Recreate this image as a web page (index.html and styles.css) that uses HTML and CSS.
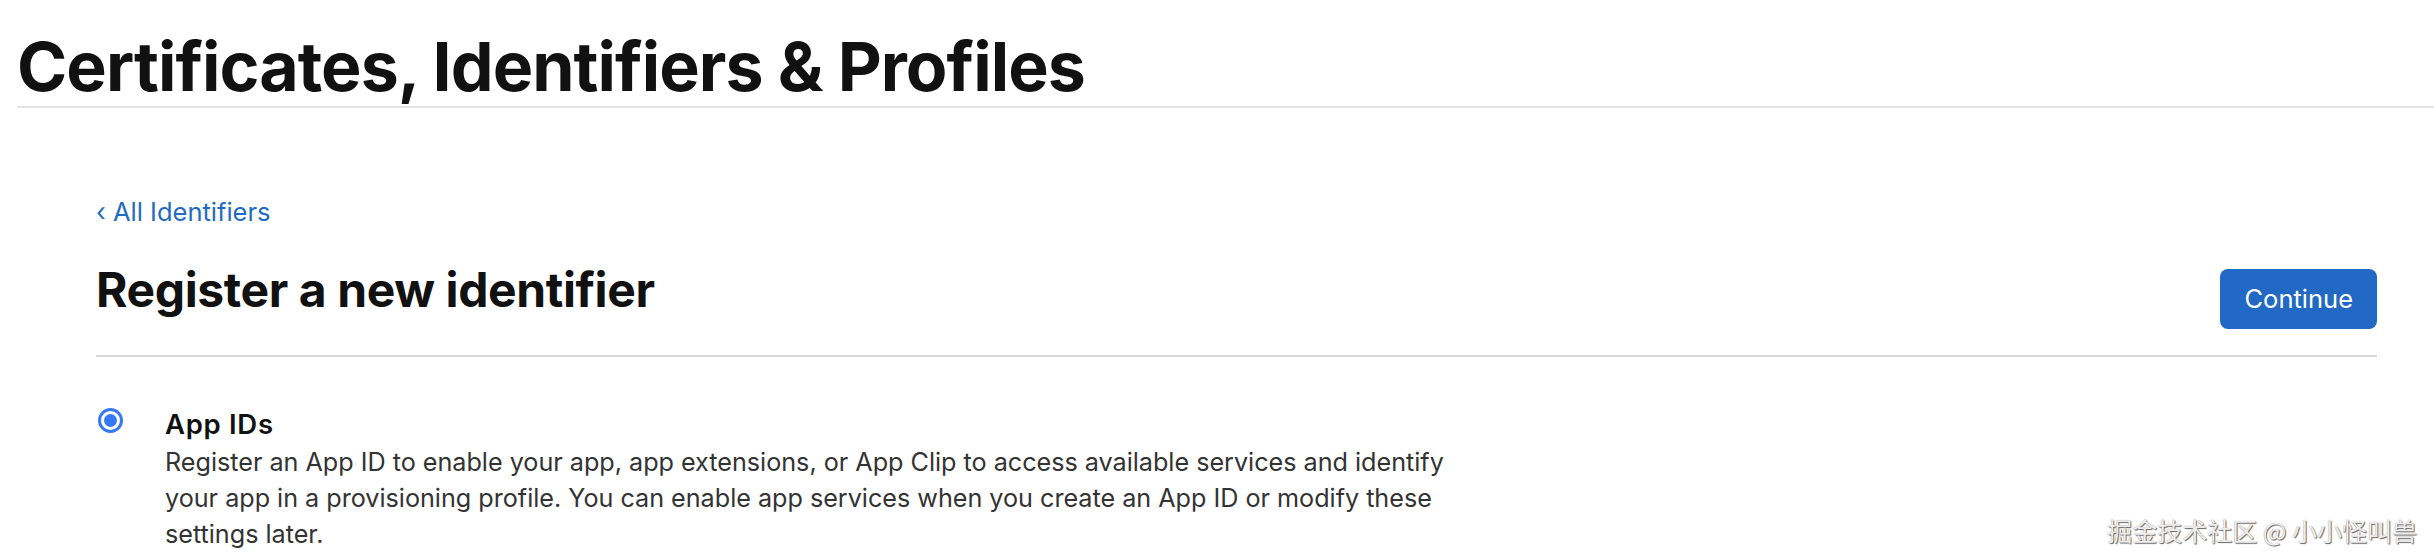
FILE: index.html
```html
<!DOCTYPE html>
<html lang="en">
<head>
<meta charset="utf-8">
<title>Certificates, Identifiers &amp; Profiles</title>
<link rel="stylesheet" href="styles.css">
</head>
<body>
<header class="page-header">
  <h1 class="page-title">Certificates, Identifiers &amp; Profiles</h1>
</header>
<main class="content">
  <a class="back-link" href="#">‹ All Identifiers</a>
  <div class="title-row">
    <h2 class="section-title">Register a new identifier</h2>
    <button class="btn-primary" type="button">Continue</button>
  </div>
  <ul class="options">
    <li class="option">
      <span class="radio checked"><span class="radio-dot"></span></span>
      <div class="option-body">
        <div class="option-title">App IDs</div>
        <p class="option-desc">Register an App ID to enable your app, app extensions, or App Clip to access available services and identify your app in a provisioning profile. You can enable app services when you create an App ID or modify these settings later.</p>
      </div>
    </li>
  </ul>
</main>
<div class="watermark">掘金技术社区 @ 小小怪叫兽</div>
</body>
</html>
```
FILE: styles.css
```css
html, body {
  margin: 0;
  padding: 0;
  background: #ffffff;
}
body {
  font-family: Inter, "Liberation Sans", sans-serif;
  color: #1d1d1f;
  position: relative;
  min-height: 560px;
  overflow: hidden;
}
.page-header {
  margin-left: 17px;
  padding-top: 32px;
  padding-bottom: 6px;
  border-bottom: 2px solid #e3e3e5;
}
.page-title {
  margin: 0;
  font-size: 68px;
  line-height: 68px;
  font-weight: 700;
  letter-spacing: -0.95px;
  color: #111111;
}
.content {
  padding: 86px 57px 0 96px;
}
.back-link {
  display: inline-block;
  font-size: 25.5px;
  line-height: 36px;
  color: #1f6bc4;
  text-decoration: none;
}
.title-row {
  display: flex;
  justify-content: space-between;
  align-items: flex-start;
  margin-top: 32px;
  padding-bottom: 26px;
  border-bottom: 2px solid #d9d9dc;
}
.section-title {
  margin: 0;
  font-size: 48px;
  line-height: 56px;
  font-weight: 700;
  letter-spacing: -0.4px;
  color: #111111;
}
.btn-primary {
  margin-top: 6.5px;
  height: 60px;
  padding: 0 24px;
  border: 0;
  border-radius: 8px;
  background: #2169c4;
  color: #ffffff;
  font-family: inherit;
  font-size: 25.5px;
}
.options {
  list-style: none;
  margin: 0;
  padding: 0;
}
.option {
  display: flex;
  gap: 42px;
  padding-top: 49.5px;
}
.radio {
  flex: none;
  box-sizing: border-box;
  width: 25px;
  height: 25px;
  margin-top: 2px;
  margin-left: 2px;
  border-radius: 50%;
  border: 3px solid #3478f6;
  display: flex;
  align-items: center;
  justify-content: center;
}
.radio-dot {
  width: 13px;
  height: 13px;
  border-radius: 50%;
  background: #3478f6;
}
.option-title {
  font-size: 27.5px;
  line-height: 36px;
  font-weight: 600;
  letter-spacing: 0.7px;
  color: #111111;
}
.option-desc {
  margin: 2px 0 0;
  max-width: 1320px;
  font-size: 25.2px;
  line-height: 36px;
  letter-spacing: -0.02px;
  color: #333333;
}
.watermark {
  position: absolute;
  right: 17px;
  bottom: 14px;
  font-family: "Noto Sans CJK SC", sans-serif;
  font-size: 25px;
  line-height: 32px;
  color: #eeeeee;
  text-shadow: 1px 1px 1px #666666, 0 0 1px #999999;
}
```
